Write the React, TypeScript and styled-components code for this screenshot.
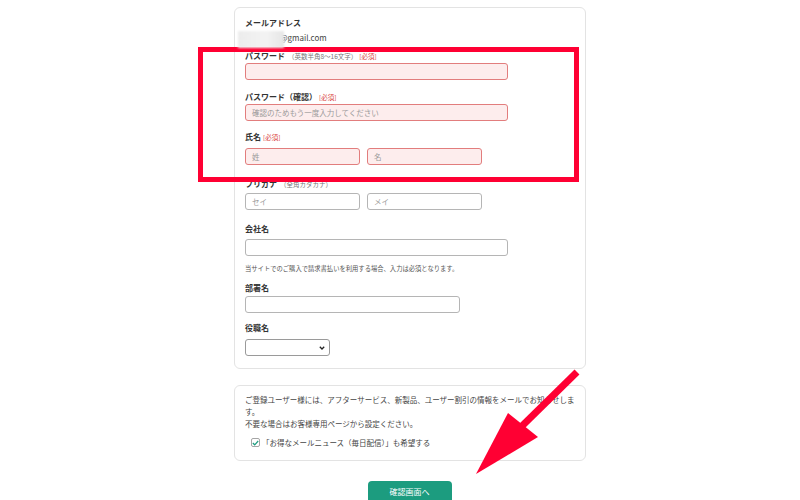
import styled, { createGlobalStyle } from 'styled-components'
import type { FunctionComponent } from 'react'

const GlobalStyle = createGlobalStyle`
  html, body {
    margin: 0;
    padding: 0;
    background: #ffffff;
  }
  body {
    font-family: 'Noto Sans CJK JP', 'Noto Sans', sans-serif;
    color: #333333;
    width: 800px;
    height: 500px;
    overflow: hidden;
  }
`

const Page = styled.div`
  position: relative;
  width: 800px;
  height: 500px;
  padding: 7px 0 0 234px;
  box-sizing: border-box;
`

const Column = styled.div`
  width: 352px;
  display: flex;
  flex-direction: column;
`

const Card = styled.section<{ $pad: string }>`
  border: 1px solid #e3e3e3;
  border-radius: 6px;
  padding: ${({ $pad }) => $pad};
  display: flex;
  flex-direction: column;
`

const Field = styled.div<{ $top: number; $gap: number }>`
  display: flex;
  flex-direction: column;
  margin-top: ${({ $top }) => $top}px;
  gap: ${({ $gap }) => $gap}px;
`

const Label = styled.div`
  font-size: 8px;
  line-height: 12px;
  font-weight: 700;
  color: #333;
  display: flex;
  align-items: center;
  white-space: nowrap;
`

const Hint = styled.span`
  font-size: 6.5px;
  font-weight: 400;
  color: #777;
  margin-left: 3px;
`

const Required = styled.span`
  font-size: 6.5px;
  font-weight: 400;
  color: #d9423d;
  margin-left: 2px;
`

const EmailRow = styled.div`
  display: flex;
  align-items: center;
  height: 12px;
  margin-top: 2px;
  font-size: 8px;
  color: #444;
`

const Blur = styled.span`
  position: relative;
  z-index: 1;
  display: inline-block;
  width: 46px;
  height: 17px;
  margin-left: -7px;
  margin-top: 5px;
  background: linear-gradient(90deg, #ececec, #f3f3f3 60%, #e6e6e6);
  filter: blur(1px);
`

const EmailText = styled.span`
  margin-left: -4px;
`

const Input = styled.div<{ $width: number; $error?: boolean }>`
  width: ${({ $width }) => $width}px;
  height: 17px;
  box-sizing: border-box;
  border: 1px solid ${({ $error }) => ($error ? '#e27d7d' : '#b5b5b5')};
  background: ${({ $error }) => ($error ? '#fdeded' : '#ffffff')};
  border-radius: 3px;
  padding-left: 6px;
  display: flex;
  align-items: center;
  font-size: 7.5px;
  color: #9a9a9a;
  white-space: nowrap;
`

const Pair = styled.div`
  display: flex;
  gap: 7px;
`

const Note = styled.div`
  margin-top: 8px;
  font-size: 6.3px;
  line-height: 10px;
  color: #555;
`

const Select = styled.div`
  width: 85px;
  height: 17px;
  box-sizing: border-box;
  border: 1px solid #9a9a9a;
  border-radius: 3px;
  display: flex;
  align-items: center;
  justify-content: flex-end;
  padding-right: 4px;
`

const Notice = styled.p`
  margin: 0;
  font-size: 7.5px;
  line-height: 12px;
  color: #444;
`

const CheckRow = styled.label`
  display: flex;
  align-items: center;
  margin: 7px 0 0 6px;
  font-size: 7.5px;
  color: #444;
`

const Box = styled.span`
  width: 9px;
  height: 9px;
  box-sizing: border-box;
  border: 1px solid #a5a5a5;
  border-radius: 2px;
  display: inline-flex;
  align-items: center;
  justify-content: center;
  margin-right: 2px;
`

const ButtonRow = styled.div`
  display: flex;
  justify-content: center;
  margin-top: 20px;
  padding-right: 1px;
`

const Button = styled.button`
  width: 84px;
  height: 24px;
  border: none;
  border-radius: 4px;
  background: #1c9c7f;
  color: #ffffff;
  font-family: inherit;
  font-size: 8px;
  padding: 0 0 3px;
`

const Highlight = styled.div`
  position: absolute;
  left: 198px;
  top: 47px;
  width: 381px;
  height: 135px;
  box-sizing: border-box;
  border: 5px solid #ff0033;
  pointer-events: none;
`

const Arrow = styled.svg`
  position: absolute;
  left: 0;
  top: 0;
  pointer-events: none;
`

const App: FunctionComponent = () => (
  <>
    <GlobalStyle />
    <Page>
      <Column>
        <Card $pad="9px 10px 12px">
          <Field $top={0} $gap={0}>
            <Label>メールアドレス</Label>
            <EmailRow>
              <Blur />
              <EmailText>@gmail.com</EmailText>
            </EmailRow>
          </Field>

          <Field $top={7} $gap={1}>
            <Label>
              パスワード<Hint>（英数半角8〜16文字）</Hint>
              <Required>[必須]</Required>
            </Label>
            <Input $width={263} $error />
          </Field>

          <Field $top={11} $gap={1}>
            <Label>
              パスワード（確認）<Required>[必須]</Required>
            </Label>
            <Input $width={263} $error>
              確認のためもう一度入力してください
            </Input>
          </Field>

          <Field $top={10} $gap={5}>
            <Label>
              氏名<Required>[必須]</Required>
            </Label>
            <Pair>
              <Input $width={115} $error>
                姓
              </Input>
              <Input $width={115} $error>
                名
              </Input>
            </Pair>
          </Field>

          <Field $top={13} $gap={3}>
            <Label>
              フリガナ<Hint>（全角カタカナ）</Hint>
            </Label>
            <Pair>
              <Input $width={115}>セイ</Input>
              <Input $width={115}>メイ</Input>
            </Pair>
          </Field>

          <Field $top={13} $gap={4}>
            <Label>会社名</Label>
            <Input $width={263} />
          </Field>
          <Note>当サイトでのご購入で請求書払いを利用する場合、入力は必須となります。</Note>

          <Field $top={8} $gap={2}>
            <Label>部署名</Label>
            <Input $width={215} />
          </Field>

          <Field $top={9} $gap={5}>
            <Label>役職名</Label>
            <Select>
              <svg width="6" height="4" viewBox="0 0 6 4">
                <path d="M0.8 0.8 L3 3 L5.2 0.8" fill="none" stroke="#222" strokeWidth="1.3" />
              </svg>
            </Select>
          </Field>
        </Card>

        <Card $pad="8px 10px 12px" style={{ marginTop: 16 }}>
          <Notice>
            ご登録ユーザー様には、アフターサービス、新製品、ユーザー割引の情報をメールでお知らせします。
            <br />
            不要な場合はお客様専用ページから設定ください。
          </Notice>
          <CheckRow>
            <Box>
              <svg width="7" height="6" viewBox="0 0 7 6">
                <path d="M0.8 3 L2.7 4.8 L6.2 1" fill="none" stroke="#1c9c7f" strokeWidth="1.2" />
              </svg>
            </Box>
            「お得なメールニュース（毎日配信）」も希望する
          </CheckRow>
        </Card>

        <ButtonRow>
          <Button>確認画面へ</Button>
        </ButtonRow>
      </Column>

      <Highlight />
      <Arrow width="800" height="500" viewBox="0 0 800 500">
        <line x1="577" y1="372" x2="522" y2="426" stroke="#ff0033" strokeWidth="7" />
        <polygon points="508,413 538,437 476,474" fill="#ff0033" />
      </Arrow>
    </Page>
  </>
)

export default App
